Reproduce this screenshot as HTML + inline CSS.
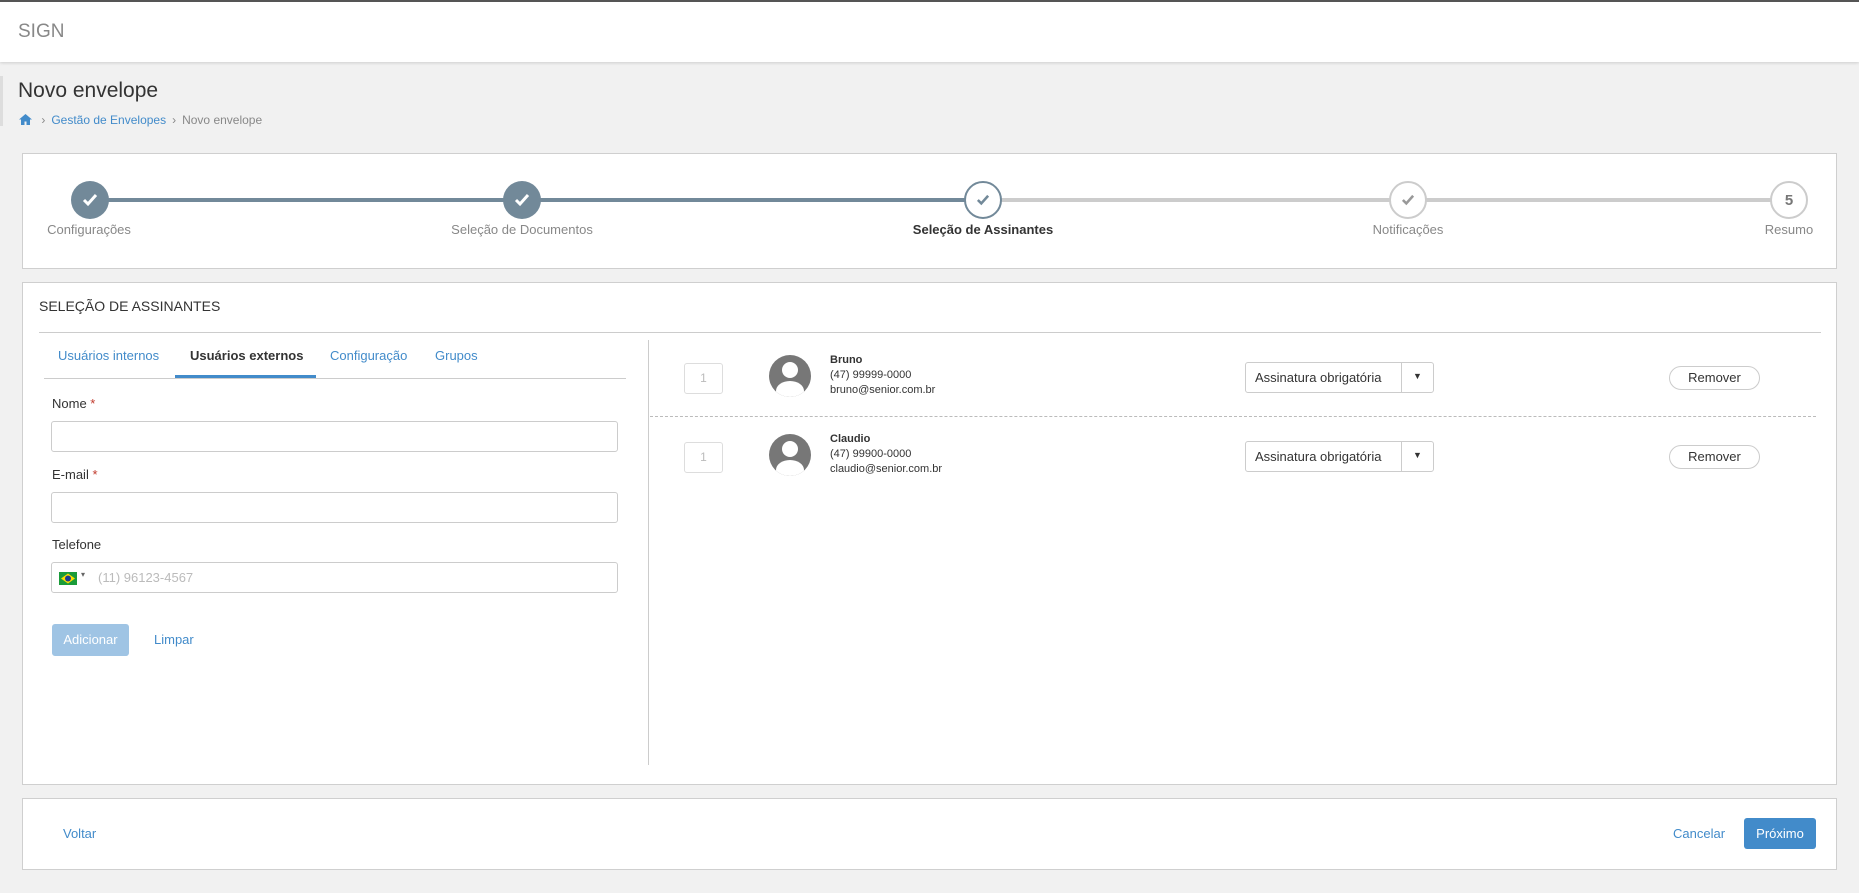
<!DOCTYPE html>
<html><head><meta charset="utf-8"><style>
*{box-sizing:border-box;margin:0;padding:0}
body{width:1859px;height:893px;background:#f1f1f1;font-family:"Liberation Sans",sans-serif;position:relative;overflow:hidden;color:#333}
.a{position:absolute}
.hdr{left:0;top:0;width:1859px;height:62px;background:#fff;border-top:2px solid #555;box-shadow:0 1px 3px rgba(0,0,0,.15)}
.card{background:#fff;border:1px solid #cfcfcf}
.circ{width:38px;height:38px;border-radius:50%;display:flex;align-items:center;justify-content:center}
.lbl{font-size:13px;color:#888;top:222px;white-space:nowrap;transform:translateX(-50%)}
.inp{left:51px;width:567px;height:31px;border:1px solid #ccc;border-radius:3px;background:#fff}
.fl{font-size:13px;color:#333;left:52px}
.tab{font-size:13px;color:#428bca;top:348px}
.num{width:39px;height:31px;border:1px solid #ddd;border-radius:3px;color:#bbb;font-size:12px;text-align:center;line-height:29px;left:684px}
.av{left:769px;width:42px;height:42px;border-radius:50%;background:#777;overflow:hidden}
.sel{left:1245px;width:189px;height:31px;border:1px solid #ccc;border-radius:3px;font-size:13px;color:#333}
.rem{left:1669px;width:91px;height:24px;border:1px solid #ccc;border-radius:12px;font-size:13px;text-align:center;line-height:22px;color:#333}
.nm{left:830px;font-size:11px;line-height:15px;color:#333}
</style></head><body>
<div class="a hdr"><div class="a" style="left:18px;top:19px;font-size:19px;color:#888">SIGN</div></div>
<div class="a" style="left:0;top:76px;width:3px;height:50px;background:#ddd"></div>
<div class="a" style="left:18px;top:79px;font-size:21px;color:#333">Novo envelope</div>
<div class="a" style="left:19px;top:113px;font-size:12px;color:#888;white-space:nowrap">
<svg width="13" height="11" viewBox="0 0 13 11" style="vertical-align:-1px"><path d="M6.5 0L0 5.5h2V11h3.5V7.5h2V11H11V5.5h2z" fill="#428bca"/></svg>
<span style="margin:0 6px">›</span><span style="color:#428bca">Gestão de Envelopes</span><span style="margin:0 6px">›</span>Novo envelope</div>

<div class="a card" style="left:22px;top:153px;width:1815px;height:116px"></div>
<div class="a" style="left:90px;top:198px;width:893px;height:4px;background:#728999"></div>
<div class="a" style="left:983px;top:198px;width:806px;height:4px;background:#ccc"></div>
<div class="a circ" style="left:71px;top:181px;background:#728999"><svg width="16" height="14" viewBox="0 0 16 14"><path d="M2 7l4 4 8-9" stroke="#fff" stroke-width="3" fill="none"/></svg></div>
<div class="a circ" style="left:503px;top:181px;background:#728999"><svg width="16" height="14" viewBox="0 0 16 14"><path d="M2 7l4 4 8-9" stroke="#fff" stroke-width="3" fill="none"/></svg></div>
<div class="a circ" style="left:964px;top:181px;background:#fff;border:2px solid #728999"><svg width="14" height="12" viewBox="0 0 16 14"><path d="M2 7l4 4 8-9" stroke="#728999" stroke-width="3" fill="none"/></svg></div>
<div class="a circ" style="left:1389px;top:181px;background:#fff;border:2px solid #ccc"><svg width="14" height="12" viewBox="0 0 16 14"><path d="M2 7l4 4 8-9" stroke="#999" stroke-width="3" fill="none"/></svg></div>
<div class="a circ" style="left:1770px;top:181px;background:#fff;border:2px solid #ccc;font-weight:bold;color:#777;font-size:15px">5</div>
<div class="a lbl" style="left:89px">Configurações</div>
<div class="a lbl" style="left:522px">Seleção de Documentos</div>
<div class="a lbl" style="left:983px;color:#333;font-weight:bold">Seleção de Assinantes</div>
<div class="a lbl" style="left:1408px">Notificações</div>
<div class="a lbl" style="left:1789px">Resumo</div>

<div class="a card" style="left:22px;top:282px;width:1815px;height:503px"></div>
<div class="a" style="left:39px;top:298px;font-size:14px;color:#333">SELEÇÃO DE ASSINANTES</div>
<div class="a" style="left:39px;top:332px;width:1782px;height:1px;background:#ccc"></div>
<div class="a" style="left:648px;top:340px;width:1px;height:425px;background:#ccc"></div>
<div class="a" style="left:44px;top:378px;width:582px;height:1px;background:#ccc"></div>
<div class="a" style="left:175px;top:375px;width:141px;height:3px;background:#428bca"></div>
<div class="a tab" style="left:58px">Usuários internos</div>
<div class="a tab" style="left:190px;color:#333;font-weight:bold">Usuários externos</div>
<div class="a tab" style="left:330px">Configuração</div>
<div class="a tab" style="left:435px">Grupos</div>
<div class="a fl" style="top:396px">Nome <span style="color:#c0392b">*</span></div>
<div class="a inp" style="top:421px"></div>
<div class="a fl" style="top:467px">E-mail <span style="color:#c0392b">*</span></div>
<div class="a inp" style="top:492px"></div>
<div class="a fl" style="top:537px">Telefone</div>
<div class="a inp" style="top:562px"><div class="a" style="left:7px;top:9px;width:18px;height:13px;background:#1a9b3a"><svg width="18" height="13" viewBox="0 0 18 13"><path d="M9 1.5L16 6.5 9 11.5 2 6.5z" fill="#ffdf00"/><circle cx="9" cy="6.5" r="3" fill="#1e3d8f"/></svg></div><div class="a" style="left:29px;top:7px;font-size:8px;color:#666">▾</div><div class="a" style="left:46px;top:7px;font-size:13px;color:#bbb">(11) 96123-4567</div></div>
<div class="a" style="left:52px;top:624px;width:77px;height:32px;background:#9fc4e4;border-radius:3px;color:#fff;font-size:13px;text-align:center;line-height:32px">Adicionar</div>
<div class="a" style="left:154px;top:632px;font-size:13px;color:#428bca">Limpar</div>

<div class="a num" style="top:363px">1</div>
<div class="a av" style="top:355px"><div class="a" style="left:13px;top:7px;width:16px;height:16px;border-radius:50%;background:#fff"></div><div class="a" style="left:7px;top:26px;width:28px;height:20px;border-radius:50% 50% 0 0;background:#fff"></div></div>
<div class="a nm" style="top:353px"><b>Bruno</b><br>(47) 99999-0000<br>bruno@senior.com.br</div>
<div class="a sel" style="top:362px"><span class="a" style="left:9px;top:7px">Assinatura obrigatória</span><div class="a" style="left:155px;top:0;width:1px;height:29px;background:#ccc"></div><span class="a" style="left:167px;top:8px;font-size:9px">▼</span></div>
<div class="a rem" style="top:366px">Remover</div>
<div class="a" style="left:650px;top:416px;width:1166px;border-top:1px dashed #bbb"></div>
<div class="a num" style="top:442px">1</div>
<div class="a av" style="top:434px"><div class="a" style="left:13px;top:7px;width:16px;height:16px;border-radius:50%;background:#fff"></div><div class="a" style="left:7px;top:26px;width:28px;height:20px;border-radius:50% 50% 0 0;background:#fff"></div></div>
<div class="a nm" style="top:432px"><b>Claudio</b><br>(47) 99900-0000<br>claudio@senior.com.br</div>
<div class="a sel" style="top:441px"><span class="a" style="left:9px;top:7px">Assinatura obrigatória</span><div class="a" style="left:155px;top:0;width:1px;height:29px;background:#ccc"></div><span class="a" style="left:167px;top:8px;font-size:9px">▼</span></div>
<div class="a rem" style="top:445px">Remover</div>

<div class="a card" style="left:22px;top:798px;width:1815px;height:72px"></div>
<div class="a" style="left:63px;top:826px;font-size:13px;color:#428bca">Voltar</div>
<div class="a" style="left:1673px;top:826px;font-size:13px;color:#428bca">Cancelar</div>
<div class="a" style="left:1744px;top:818px;width:72px;height:31px;background:#428bca;border-radius:3px;color:#fff;font-size:13px;text-align:center;line-height:31px">Próximo</div>
</body></html>
